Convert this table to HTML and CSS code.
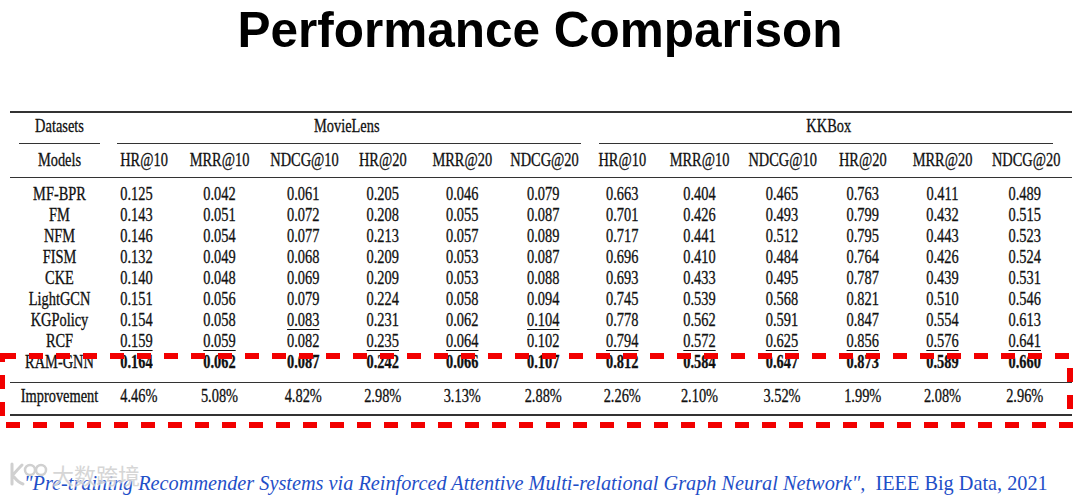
FILE: index.html
```html
<!DOCTYPE html>
<html>
<head>
<meta charset="utf-8">
<link rel="stylesheet" href="styles.css">
</head>
<body>
<div class="page">
  <h1 class="title">Performance Comparison</h1>
  <div class="tbl">
    <div class="grid hgrp">
      <div>Datasets</div>
      <div class="ml">MovieLens</div>
      <div class="kk">KKBox</div>
    </div>
    <div class="cmid"><span class="r1"></span><span class="r2"></span><span class="r3"></span></div>
    <div class="grid row hmod">
      <div>Models</div><div>HR@10</div><div>MRR@10</div><div>NDCG@10</div><div>HR@20</div><div>MRR@20</div><div>NDCG@20</div><div>HR@10</div><div>MRR@10</div><div>NDCG@10</div><div>HR@20</div><div>MRR@20</div><div>NDCG@20</div>
    </div>
    <div class="tbody">
      <div class="grid row"><div>MF-BPR</div><div>0.125</div><div>0.042</div><div>0.061</div><div>0.205</div><div>0.046</div><div>0.079</div><div>0.663</div><div>0.404</div><div>0.465</div><div>0.763</div><div>0.411</div><div>0.489</div></div>
      <div class="grid row"><div>FM</div><div>0.143</div><div>0.051</div><div>0.072</div><div>0.208</div><div>0.055</div><div>0.087</div><div>0.701</div><div>0.426</div><div>0.493</div><div>0.799</div><div>0.432</div><div>0.515</div></div>
      <div class="grid row"><div>NFM</div><div>0.146</div><div>0.054</div><div>0.077</div><div>0.213</div><div>0.057</div><div>0.089</div><div>0.717</div><div>0.441</div><div>0.512</div><div>0.795</div><div>0.443</div><div>0.523</div></div>
      <div class="grid row"><div>FISM</div><div>0.132</div><div>0.049</div><div>0.068</div><div>0.209</div><div>0.053</div><div>0.087</div><div>0.696</div><div>0.410</div><div>0.484</div><div>0.764</div><div>0.426</div><div>0.524</div></div>
      <div class="grid row"><div>CKE</div><div>0.140</div><div>0.048</div><div>0.069</div><div>0.209</div><div>0.053</div><div>0.088</div><div>0.693</div><div>0.433</div><div>0.495</div><div>0.787</div><div>0.439</div><div>0.531</div></div>
      <div class="grid row"><div>LightGCN</div><div>0.151</div><div>0.056</div><div>0.079</div><div>0.224</div><div>0.058</div><div>0.094</div><div>0.745</div><div>0.539</div><div>0.568</div><div>0.821</div><div>0.510</div><div>0.546</div></div>
      <div class="grid row"><div>KGPolicy</div><div>0.154</div><div>0.058</div><div class="u">0.083</div><div>0.231</div><div>0.062</div><div class="u">0.104</div><div>0.778</div><div>0.562</div><div>0.591</div><div>0.847</div><div>0.554</div><div>0.613</div></div>
      <div class="grid row"><div>RCF</div><div class="u">0.159</div><div class="u">0.059</div><div>0.082</div><div class="u">0.235</div><div class="u">0.064</div><div>0.102</div><div class="u">0.794</div><div class="u">0.572</div><div class="u">0.625</div><div class="u">0.856</div><div class="u">0.576</div><div class="u">0.641</div></div>
      <div class="grid row best"><div>RAM-GNN</div><div>0.164</div><div>0.062</div><div>0.087</div><div>0.242</div><div>0.066</div><div>0.107</div><div>0.812</div><div>0.584</div><div>0.647</div><div>0.873</div><div>0.589</div><div>0.660</div></div>
    </div>
    <div class="grid row imp"><div>Improvement</div><div>4.46%</div><div>5.08%</div><div>4.82%</div><div>2.98%</div><div>3.13%</div><div>2.88%</div><div>2.26%</div><div>2.10%</div><div>3.52%</div><div>1.99%</div><div>2.08%</div><div>2.96%</div></div>
  </div>
  <p class="ref"><i>"Pre-training Recommender Systems via Reinforced Attentive Multi-relational Graph Neural Network",</i>&nbsp; IEEE Big Data, 2021</p>
  <div class="wm">
    <svg class="wm-logo" width="40" height="26" viewBox="0 0 40 26">
      <path d="M4 3 V23 M4 15 Q10 8 14 4 M6 16 Q11 22 15 23" fill="none" stroke="#c8c8c8" stroke-width="3" stroke-linecap="round"/>
      <circle cx="22" cy="9" r="5" fill="none" stroke="#c8c8c8" stroke-width="2.5"/>
      <circle cx="33" cy="9" r="5" fill="none" stroke="#c8c8c8" stroke-width="2.5"/>
    </svg>
    <span class="wm-text">大数跨境</span>
  </div>
  <svg class="box" width="1080" height="498" viewBox="0 0 1080 498">
    <rect x="2" y="356" width="1068" height="69" fill="none" stroke="#f20000" stroke-width="6" stroke-dasharray="14 13"/>
  </svg>
</div>
</body>
</html>
```

FILE: styles.css
```css
body {
  margin: 0;
  background: #fff;
}

.page {
  position: relative;
  width: 1080px;
  height: 498px;
  overflow: hidden;
  font-family: "Liberation Serif", "Times New Roman", serif;
  color: #111;
}

.title {
  margin: 0;
  padding-top: 2px;
  height: 56px;
  font: bold 49.5px/56px "Liberation Sans", Arial, sans-serif;
  text-align: center;
  color: #000;
}

.tbl {
  margin: 53px 0 0 10px;
  width: 1062px;
  border-top: 2px solid #333;
  border-bottom: 2px solid #333;
  -webkit-text-stroke: 0.3px #111;
}

.grid {
  display: grid;
  grid-template-columns: 99px 67.5px 85px 82.5px 77.5px 80.5px 82.5px 74.5px 81px 84px 77.5px 81px 89.5px;
  font-size: 18px;
  line-height: 21px;
  height: 21px;
}

.grid > div {
  transform: scaleX(0.8);
  text-align: center;
  white-space: nowrap;
}

.row > div:nth-child(2) {
  text-align: left;
  padding-left: 14px;
  transform-origin: left center;
}

.row > div:nth-child(13) {
  padding-right: 7.5px;
}

.hgrp {
  margin-top: 3.4px;
}

.hgrp .ml {
  grid-column: 2 / 8;
}

.hgrp .kk {
  grid-column: 8 / 14;
}

.cmid {
  display: grid;
  grid-template-columns: 99px 67.5px 85px 82.5px 77.5px 80.5px 82.5px 74.5px 81px 84px 77.5px 81px 89.5px;
  margin-top: 5.6px;
  height: 1px;
}

.cmid span {
  background: #333;
}

.cmid .r1 {
  grid-column: 1;
  margin: 0 9px;
}

.cmid .r2 {
  grid-column: 2 / 8;
  margin: 0 3.5px 0 8px;
}

.cmid .r3 {
  grid-column: 8 / 14;
  margin: 0 19px 0 14.5px;
}

.hmod {
  margin-top: 6.4px;
  padding-bottom: 6.1px;
  border-bottom: 1px solid #333;
  box-sizing: content-box;
}

.tbody {
  padding-top: 5.9px;
  padding-bottom: 8.4px;
  border-bottom: 1px solid #333;
}

.u {
  text-decoration: underline;
  text-decoration-thickness: 1px;
  text-underline-offset: 3px;
}

.best > div + div {
  font-weight: bold;
}

.imp {
  padding-top: 3.3px;
  padding-bottom: 7.4px;
  box-sizing: content-box;
}

.ref {
  margin: 55px 0 0 24px;
  font-size: 20.3px;
  line-height: 24px;
  color: #1f4fc8;
  white-space: nowrap;
}

.wm {
  position: absolute;
  left: 8px;
  top: 461px;
  display: flex;
  align-items: center;
  gap: 4px;
  opacity: 0.85;
}

.wm-text {
  font-family: "Noto Sans CJK SC", sans-serif;
  font-size: 22px;
  line-height: 26px;
  color: #cfcfcf;
  text-shadow: 0 0 2px #fff, 0 0 2px #fff;
}

.box {
  position: absolute;
  left: 0;
  top: 0;
  pointer-events: none;
}
```
